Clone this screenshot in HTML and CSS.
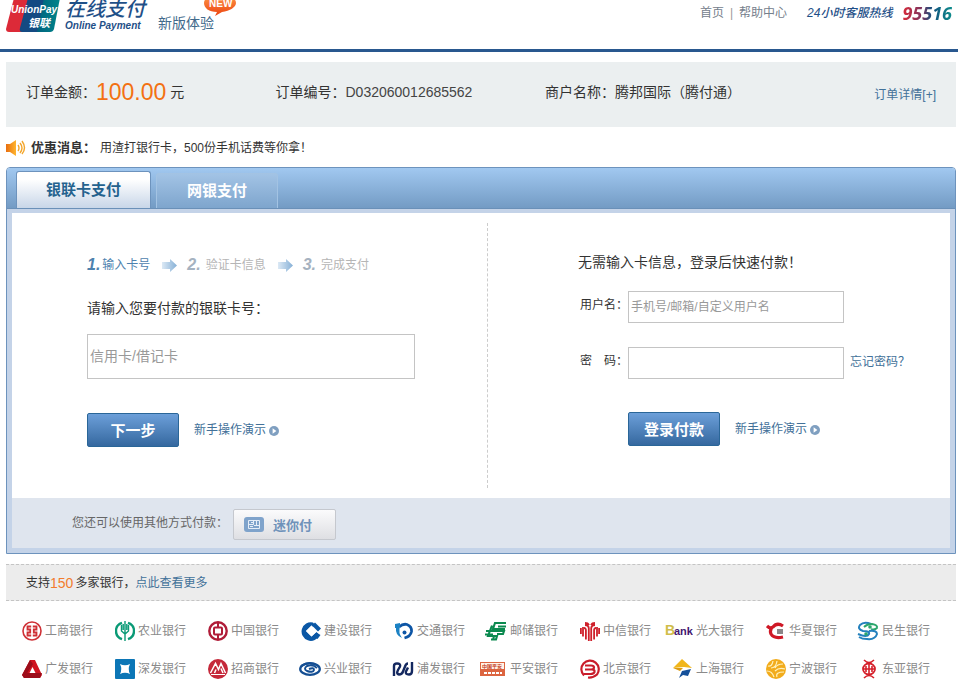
FILE: index.html
```html
<!DOCTYPE html>
<html lang="zh-CN">
<head>
<meta charset="utf-8">
<title>银联在线支付</title>
<link rel="stylesheet" href="styles.css">
</head>
<body>
<svg class="defs" aria-hidden="true">
  <defs>
    <linearGradient id="arrowFill" x1="0" x2="1" y1="0" y2="0"><stop offset="0" stop-color="#dce9f5"/><stop offset="1" stop-color="#86b0d6"/></linearGradient>
    <linearGradient id="teal" x1="0" x2="1" y1="0" y2="0"><stop offset="0" stop-color="#00627e"/><stop offset="1" stop-color="#00868a"/></linearGradient>
    <linearGradient id="newFill" x1="0" x2="0" y1="0" y2="1"><stop offset="0" stop-color="#ff9a4a"/><stop offset="1" stop-color="#ec4310"/></linearGradient>
    <linearGradient id="horn" x1="0" x2="1" y1="0" y2="0"><stop offset="0" stop-color="#e86e10"/><stop offset="1" stop-color="#ffb52e"/></linearGradient>
    <symbol id="arrow" viewBox="0 0 15 13"><path d="M0 3h8V0l7 6.500L8 13v-3H0z" fill="url(#arrowFill)"/></symbol>
    <symbol id="play" viewBox="0 0 10 10"><circle cx="5" cy="5" r="5" fill="#7f9fc0"/><path d="M3.600 2.200L7.400 5 3.600 7.800z" fill="#fff"/></symbol>
  </defs>
</svg>

<header class="header">
  <div class="brand">
    <svg class="logo" viewBox="0 0 54 34" role="img" aria-label="UnionPay 银联">
      <path d="M8 0h17l-6 34H3q-3 0-3-3z" fill="#dc2a38"/>
      <path d="M22 0h20l-7 34H16q-3 0-2-4z" fill="#144a82"/>
      <path d="M38 0h16l-6 31q-1 3-4 3H31z" fill="url(#teal)"/>
      <text x="5" y="15" class="logo-en">UnionPay</text>
      <text x="22" y="29" class="logo-cn">银联</text>
    </svg>
    <div class="brand-name">
      <span class="brand-cn">在线支付</span>
      <span class="brand-en">Online Payment</span>
    </div>
    <div class="trial">新版体验
      <svg class="new" viewBox="0 0 34 22" aria-hidden="true">
        <path d="M17 0C26 0 33 4 33 9c0 4-6 8-14 9l-7 4 2-4C6 18 1 14 1 9c0-5 7-9 16-9z" fill="url(#newFill)"/>
        <text x="6" y="13" class="new-text">NEW</text>
      </svg>
    </div>
  </div>
  <nav class="top-nav">
    <a href="#">首页</a><span class="bar">|</span><a href="#">帮助中心</a>
    <span class="hotline">24小时客服热线</span>
    <strong class="phone">95516</strong>
  </nav>
</header>

<main class="page">
  <section class="order">
    <div class="order-item">订单金额：<span class="amount">100.00</span>元</div>
    <div class="order-item">订单编号：<span class="number">D032060012685562</span></div>
    <div class="order-item">商户名称：腾邦国际（腾付通）</div>
    <a class="order-more" href="#">订单详情[+]</a>
  </section>

  <section class="news">
    <svg class="speaker" viewBox="0 0 20 16" aria-hidden="true">
      <path d="M0 4h4l6-4v16l-6-4H0z" fill="url(#horn)"/>
      <path d="M12 5q2 3 0 6M14 3q4 5 0 10M16 1q5 7 0 13" fill="none" stroke="#f3a62c" stroke-width="1.400"/>
    </svg>
    <strong>优惠消息：</strong>
    <span>用渣打银行卡，500份手机话费等你拿！</span>
  </section>

  <section class="panel">
    <div class="tabs" role="tablist">
      <button class="tab tab-active" type="button" role="tab" aria-selected="true">银联卡支付</button>
      <button class="tab" type="button" role="tab" aria-selected="false">网银支付</button>
    </div>
    <div class="frame">
      <div class="columns">
        <form class="card-form">
          <ol class="steps">
            <li class="current"><b>1.</b>输入卡号</li>
            <li><svg class="arrow" aria-hidden="true"><use href="#arrow"/></svg><b>2.</b>验证卡信息</li>
            <li><svg class="arrow" aria-hidden="true"><use href="#arrow"/></svg><b>3.</b>完成支付</li>
          </ol>
          <label class="prompt" for="card">请输入您要付款的银联卡号：</label>
          <input class="text-box card-box" id="card" type="text" placeholder="信用卡/借记卡">
          <div class="actions">
            <button class="primary" type="button">下一步</button>
            <a class="demo" href="#">新手操作演示<svg class="play" aria-hidden="true"><use href="#play"/></svg></a>
          </div>
        </form>
        <form class="login-form">
          <p class="login-title">无需输入卡信息，登录后快速付款！</p>
          <div class="field">
            <label for="user">用户名：</label>
            <input class="text-box" id="user" type="text" placeholder="手机号/邮箱/自定义用户名">
          </div>
          <div class="field">
            <label for="pass">密　码：</label>
            <input class="text-box" id="pass" type="password">
            <a class="forgot" href="#">忘记密码？</a>
          </div>
          <div class="actions login-actions">
            <button class="primary" type="button">登录付款</button>
            <a class="demo" href="#">新手操作演示<svg class="play" aria-hidden="true"><use href="#play"/></svg></a>
          </div>
        </form>
      </div>
      <div class="other">
        <span>您还可以使用其他方式付款：</span>
        <button class="mini" type="button">
          <svg class="mini-icon" viewBox="0 0 20 15" aria-hidden="true">
            <rect width="20" height="15" rx="3" fill="#7fa3cb"/>
            <path d="M4.500 3.500h11v8h-11zM4.500 7.500h5v-4M7 5.500h2M12.500 3.500v5M10 8.500h5M6 9.500h3" fill="none" stroke="#e6eef8"/>
          </svg>迷你付
        </button>
      </div>
    </div>
  </section>

  <section class="support">支持<span class="count">150</span>多家银行，<a href="#">点此查看更多</a></section>

  <ul class="banks">
    <li><span class="mark"><svg viewBox="0 0 20 20"><circle cx="10" cy="10" r="9" fill="#fff" stroke="#cf3035" stroke-width="1.600"/><path d="M9.200 5.500H5.500v3h2.700v3H5.500v3h3.700M10.800 5.500h3.700v3h-2.700v3h2.700v3h-3.700" fill="none" stroke="#cf3035" stroke-width="1.800"/></svg></span>工商银行</li>
    <li><span class="mark"><svg viewBox="0 0 20 20"><path d="M7 18.200A8.600 8.600 0 0 1 7 1.800M13 1.800a8.600 8.600 0 0 1 0 16.400" fill="none" stroke="#0a9a76" stroke-width="2.400"/><path d="M10 0v20M6.500 4v6l3.500 3 3.500-3V4M8.200 3v6M11.800 3v6" fill="none" stroke="#0a9a76" stroke-width="1.400"/></svg></span>农业银行</li>
    <li><span class="mark"><svg viewBox="0 0 20 20"><circle cx="10" cy="10" r="8.700" fill="#fff" stroke="#b01c38" stroke-width="2.400"/><path d="M10 1v5M10 14v5" stroke="#b01c38" stroke-width="2"/><rect x="6" y="6.500" width="8" height="7" rx="1" fill="#fff" stroke="#b01c38" stroke-width="2"/></svg></span>中国银行</li>
    <li><span class="mark"><svg viewBox="0 0 20 20"><path d="M12 1.500A9.300 9.300 0 1 0 18.500 14L15.500 11l-5 4.500L5 10l5.500-5.500L12 6l2-2z" fill="#0a57a5"/><path d="M10.500 4.500L5 10l5.500 5.500L16 10z" fill="#fff"/><path d="M14 1.500l6 6-3 3-6-6z" fill="#0a57a5"/><path d="M16 12l3.500 2-3 4-4-3z" fill="#0a57a5"/></svg></span>建设银行</li>
    <li><span class="mark"><svg viewBox="0 0 20 20"><path d="M5 6Q9 2.500 13 3.500q5 2 4.500 7-1 5-7 6.500" fill="none" stroke="#0d55a5" stroke-width="2.800"/><path d="M1 3l5-1v3q-2 7 2 12-7-3-6-10L1 7z" fill="#1c82c4"/><circle cx="10.500" cy="11.500" r="2" fill="#0d55a5"/></svg></span>交通银行</li>
    <li><span class="mark"><svg class="w22" viewBox="0 0 22 20"><path d="M21 2H10L8 8h12M21 5.500h-8M7 4.500L3 15h9l-1 3.500H6M1 10h18l-1 3h-6M0 13.500h8M9 15l-1 4" fill="none" stroke="#0c8a50" stroke-width="2.100"/></svg></span>邮储银行</li>
    <li><span class="mark"><svg viewBox="0 0 20 20"><path d="M8.800 20V7Q8.500 4 5 4M11.200 20V7q0.300-3 3.800-3M5.900 18.500V9Q5.900 7 4 7M14.100 18.500V9Q14.100 7 16 7M3 15.500V6M17 15.500V6M5 2q3 0 4 2M15 2q-3 0-4 2M0.900 7v6M19.100 7v6" fill="none" stroke="#cf202b" stroke-width="1.800"/></svg></span>中信银行</li>
    <li><span class="mark"><svg class="w28" viewBox="0 0 28 20"><text x="0" y="14" class="bank-b">B</text><text x="9" y="14" class="ank">ank</text></svg></span>光大银行</li>
    <li><span class="mark"><svg viewBox="0 0 20 20"><path d="M1 5q3 3 6 1 4-5 10-1M8 5Q3 8 5 13q3 5 12 3" fill="none" stroke="#cf1826" stroke-width="3.200"/><rect x="11" y="8" width="6" height="5" fill="#8a8587"/></svg></span>华夏银行</li>
    <li><span class="mark"><svg class="w22" viewBox="0 0 22 20"><path d="M14 3Q7 0 3 4q-3 4 3 6 7 0 6 3-2 4-11 0" fill="none" stroke="#2481bd" stroke-width="2"/><path d="M7 6q3-3 8-3 6 1 5 4-2 2-6 1" fill="none" stroke="#2ba66c" stroke-width="1.800"/><path d="M12 10q8-1 8 3-2 6-10 5-5 0-8-2" fill="none" stroke="#2481bd" stroke-width="2"/><circle cx="13" cy="6" r="1.800" fill="#2ba66c"/><circle cx="9" cy="13" r="1.800" fill="#2ba66c"/></svg></span>民生银行</li>
    <li><span class="mark"><svg viewBox="0 0 20 20"><path d="M8 1h5l7 15-2 3H2l-2-3z" fill="#d0121f"/><path d="M8 1L0 16l2 3 9-14zM5 14h15l-2 5H2z" fill="#9c0d1a"/><path d="M10.500 8l3 6h-6z" fill="#fff"/></svg></span>广发银行</li>
    <li><span class="mark"><svg viewBox="0 0 20 20"><rect width="20" height="20" rx="1" fill="#0c76b6"/><path d="M5 5q5 2.500 10 0-2.500 5 0 10-5-2.500-10 0 2.500-5 0-10z" fill="#fff"/></svg></span>深发银行</li>
    <li><span class="mark"><svg viewBox="0 0 20 20"><circle cx="10" cy="10" r="10" fill="#c5283a"/><path d="M2.500 14L7.500 4.500l3 6 2.500-6 4.500 9.500M6.500 14L8 10.500M13 9.500l2 4.500" fill="none" stroke="#fff" stroke-width="1.500"/><path d="M3 15.500h14" stroke="#fff"/></svg></span>招商银行</li>
    <li><span class="mark"><svg class="w22" viewBox="0 0 22 20"><ellipse cx="11" cy="10" rx="9.800" ry="5.800" fill="none" stroke="#144e93" stroke-width="2.300"/><path d="M18 9q-4-4-10-2-4 3 0 5 6 2 7-1 0-3-5-1M2 7q7-5 16-1" fill="none" stroke="#144e93" stroke-width="1.900"/></svg></span>兴业银行</li>
    <li><span class="mark"><svg class="w22" viewBox="0 0 22 20"><path d="M2 17V7q0-2.500 3-2.500 4 0 3 3L6 11q-2 4 1 4.500 3 0 4-3l2-5q1-3 3-3M20 3v9q0 3.500-3 3.500-4 0-3-3l2-4" fill="none" stroke="#14285f" stroke-width="2.400"/></svg></span>浦发银行</li>
    <li><span class="mark"><svg class="w28" viewBox="0 0 28 20"><path d="M1 3h25v14H1z" fill="#dc6540"/><path d="M2 4h23v6H2z" fill="#fff3e8"/><text x="3" y="9" class="pingan">中国平安</text><path d="M5 14h18" stroke="#fff" stroke-width="2" stroke-dasharray="3 1"/></svg></span>平安银行</li>
    <li><span class="mark"><svg viewBox="0 0 20 20"><path d="M4 16.500A8.700 8.700 0 1 1 17 15.500Q13 19 8 18.500" fill="none" stroke="#c91c2a" stroke-width="2.200"/><path d="M5 6.500h6q3 0 3 2t-3 2H5h7q3 0 2.500 2.500-1 2-4 2H4" fill="none" stroke="#c91c2a" stroke-width="2.200"/></svg></span>北京银行</li>
    <li><span class="mark"><svg viewBox="0 0 20 20"><path d="M0 9l9-9 10 9-8-1z" fill="#f1b61b"/><path d="M0 9h10l-3 3z" fill="#db9b13"/><path d="M6 19l3-7 9-2-3 7-5-1z" fill="#15509a"/></svg></span>上海银行</li>
    <li><span class="mark"><svg viewBox="0 0 20 20"><circle cx="10" cy="10" r="10" fill="#f2ac1c"/><path d="M2 7q4 1 5-5M5 9q5 0 6-7M1 12q5 0 7 6M9 9q2-4 8-4M9 12q4-4 10-2M11 18q-2-5 7-5" fill="none" stroke="#fff1bb" stroke-width="1.200"/></svg></span>宁波银行</li>
    <li><span class="mark"><svg viewBox="0 0 20 20"><path d="M5 1q5 5 10 0M5 19q5-5 10 0M10 3v14M4 10h12M7 7v6M13 7v6M7 10h6" fill="none" stroke="#d51f2a" stroke-width="1.600"/><ellipse cx="10" cy="10" rx="6" ry="5.500" fill="none" stroke="#d51f2a" stroke-width="1.800"/></svg></span>东亚银行</li>
  </ul>
</main>
</body>
</html>
```
FILE: styles.css
```css
* {
  box-sizing: border-box;
}

body {
  margin: 0;
  overflow: hidden;
  background: #fff;
  color: #333;
  font: 12px/20px "Liberation Sans", "Noto Sans CJK SC", sans-serif;
}

a {
  color: #427199;
  text-decoration: none;
}

button,
input {
  margin: 0;
  font-family: inherit;
}

ul,
ol,
p {
  margin: 0;
  padding: 0;
  list-style: none;
}

.defs {
  position: absolute;
  width: 0;
  height: 0;
}

/* Header */

.header {
  display: flex;
  justify-content: space-between;
  height: 52px;
  padding: 0 6px;
  border-bottom: 3px solid #29588f;
  overflow: hidden;
}

.brand {
  display: flex;
}

.logo {
  width: 54px;
  height: 34px;
  margin-top: -2px;
}

.logo-en {
  fill: #fff;
  font: italic bold 10px "Liberation Sans", sans-serif;
}

.logo-cn {
  fill: #fff;
  font: italic bold 11px "Noto Sans CJK SC", sans-serif;
}

.brand-name {
  display: flex;
  flex-direction: column;
  margin-left: 5px;
  color: #1f5088;
  font-style: italic;
  white-space: nowrap;
}

.brand-cn {
  font-size: 20px;
  font-weight: 500;
  line-height: 18px;
}

.brand-en {
  font-size: 10px;
  font-weight: bold;
  line-height: 16px;
}

.trial {
  position: relative;
  margin-left: 13px;
  padding-top: 13px;
  color: #426a8c;
  font-size: 14px;
}

.new {
  position: absolute;
  top: -6px;
  left: 45px;
  width: 34px;
  height: 22px;
}

.new-text {
  fill: #fff;
  font: bold 10px "Liberation Sans", sans-serif;
}

.top-nav {
  display: flex;
  height: 26px;
  align-items: center;
  white-space: nowrap;
}

.top-nav a {
  color: #75808c;
}

.bar {
  margin: 0 6px;
  color: #999;
}

.hotline {
  margin-left: 20px;
  color: #1f5088;
  font-style: italic;
  font-weight: 500;
}

.phone {
  margin-left: 10px;
  background: linear-gradient(90deg, #dc2a38, #7c3560 40%, #14507f 60%, #0c8c8b);
  background-clip: text;
  color: transparent;
  font: italic bold 18px "Noto Sans", sans-serif;
}

/* Order summary */

.page {
  padding: 10px 2px 0 6px;
}

.order {
  display: grid;
  grid-template-columns: 25fr 27fr 33fr auto;
  align-items: center;
  height: 65px;
  padding: 0 20px 6px;
  background: #ebeff0;
  font-size: 14px;
  white-space: nowrap;
}

.order-item {
  display: flex;
  align-items: center;
}

.amount {
  margin-right: 4px;
  color: #f37112;
  font-size: 23px;
}

.number {
  color: #444;
}

.order-more {
  padding-top: 6px;
  font-size: 12px;
}

.news {
  display: flex;
  align-items: center;
  height: 40px;
  padding-top: 2px;
}

.news strong {
  margin: 0 4px 0 5px;
  font-size: 13px;
}

.speaker {
  width: 20px;
  height: 16px;
}

/* Payment panel */

.panel {
  border: 1px solid #6d93bd;
  border-radius: 4px 4px 0 0;
  overflow: hidden;
}

.tabs {
  display: flex;
  align-items: flex-end;
  gap: 5px;
  height: 41px;
  padding-left: 9px;
  border-bottom: 1px solid #6a90b8;
  background: linear-gradient(#a1c8f0, #739bc4);
}

.tab {
  width: 122px;
  height: 35px;
  padding: 0 0 4px;
  border: 1px solid #a3c3e3;
  border-bottom: 0;
  border-radius: 3px 3px 0 0;
  background: linear-gradient(#a2c3e5, #7ea5cd);
  color: #fff;
  font-size: 15px;
  font-weight: bold;
}

.tab-active {
  width: 135px;
  height: 37px;
  border: 1px solid #6d93bd;
  border-bottom: 0;
  background: linear-gradient(#fff 20%, #c8d6e8);
  color: #24628e;
}

.frame {
  padding: 4px 5px 5px;
  background: #c4d3e8;
}

.columns {
  display: grid;
  grid-template-columns: 476fr 462fr;
  padding: 10px 0;
  background: #fff;
}

.card-form {
  padding: 32px 0 41px 75px;
  border-right: 1px dashed #ccc;
}

.steps {
  display: flex;
  color: #b5b5b5;
}

.steps li {
  display: flex;
  align-items: center;
}

.steps b {
  margin-right: 5px;
  font-size: 16px;
  font-style: italic;
  color: #a5b2c0;
}

.steps .current,
.steps .current b {
  color: #4e82ae;
}

.steps .current b {
  margin-right: 2px;
}

.arrow {
  width: 15px;
  height: 13px;
  margin: 0 10px 0 12px;
}

.prompt {
  display: block;
  margin: 23px 0 16px;
  font-size: 14px;
}

.text-box {
  display: block;
  width: 216px;
  height: 32px;
  padding: 0 2px;
  border: 1px solid #c4c4c4;
  background: #fff;
  color: #333;
  font-size: 12px;
}

.card-box {
  width: 328px;
  height: 45px;
  padding-bottom: 2px;
  font-size: 14px;
}

.text-box::placeholder {
  color: #999;
}

.actions {
  display: flex;
  align-items: center;
  gap: 15px;
  margin-top: 34px;
}

.primary {
  width: 92px;
  height: 34px;
  padding: 0 0 2px;
  border: 1px solid #2a6698;
  border-radius: 2px;
  background: linear-gradient(#6c9fd9, #35689f);
  color: #fff;
  font-size: 15px;
  font-weight: bold;
}

.demo {
  display: flex;
  align-items: center;
}

.play {
  width: 10px;
  height: 10px;
  margin: 2px 0 0 3px;
}

.login-form {
  padding: 29px 0 0 90px;
}

.login-title {
  margin-bottom: 19px;
  font-size: 14px;
}

.field {
  display: flex;
  align-items: center;
  margin-bottom: 24px;
}

.field label {
  width: 50px;
  padding: 0 0 4px 2px;
  white-space: nowrap;
}

.forgot {
  margin-left: 6px;
  padding-bottom: 2px;
}

.login-actions {
  margin-top: 33px;
  padding-left: 50px;
}

.other {
  display: flex;
  align-items: center;
  height: 50px;
  padding-left: 60px;
  background: #dfe5ee;
  color: #666;
}

.mini {
  display: flex;
  align-items: center;
  gap: 9px;
  width: 103px;
  height: 31px;
  margin: 2px 0 0 5px;
  padding: 0 10px;
  border: 1px solid #c5c8ce;
  border-radius: 2px;
  background: linear-gradient(#fbfbfc, #dedfe3);
  color: #6f92ba;
  font-size: 13px;
  font-weight: bold;
}

.mini-icon {
  width: 20px;
  height: 15px;
}

/* Supported banks */

.support {
  display: flex;
  align-items: center;
  height: 37px;
  margin-top: 10px;
  padding-left: 20px;
  border: dashed #c4c4c4;
  border-width: 1px 0;
  background: #ececec;
}

.count {
  margin-right: 2px;
  color: #f37b2c;
  font-size: 14px;
}

.banks {
  display: grid;
  grid-template-columns: repeat(10, 1fr);
  padding: 11px 12px 0 8px;
  color: #8a8a8a;
}

.banks li {
  display: flex;
  align-items: center;
  gap: 2px;
  height: 38px;
  white-space: nowrap;
}

.mark {
  display: flex;
  justify-content: flex-end;
  width: 29px;
}

.mark svg {
  width: 20px;
  height: 20px;
  margin-right: 1px;
}

.mark .w22 {
  width: 22px;
}

.mark .w28 {
  width: 28px;
}

.bank-b {
  fill: #d0bd4a;
  font: bold 14px "Liberation Sans", sans-serif;
}

.ank {
  fill: #43166f;
  font: bold 11px "Liberation Sans", sans-serif;
}

.pingan {
  fill: #c4401c;
  font: bold 5px "Noto Sans CJK SC", sans-serif;
}
```
